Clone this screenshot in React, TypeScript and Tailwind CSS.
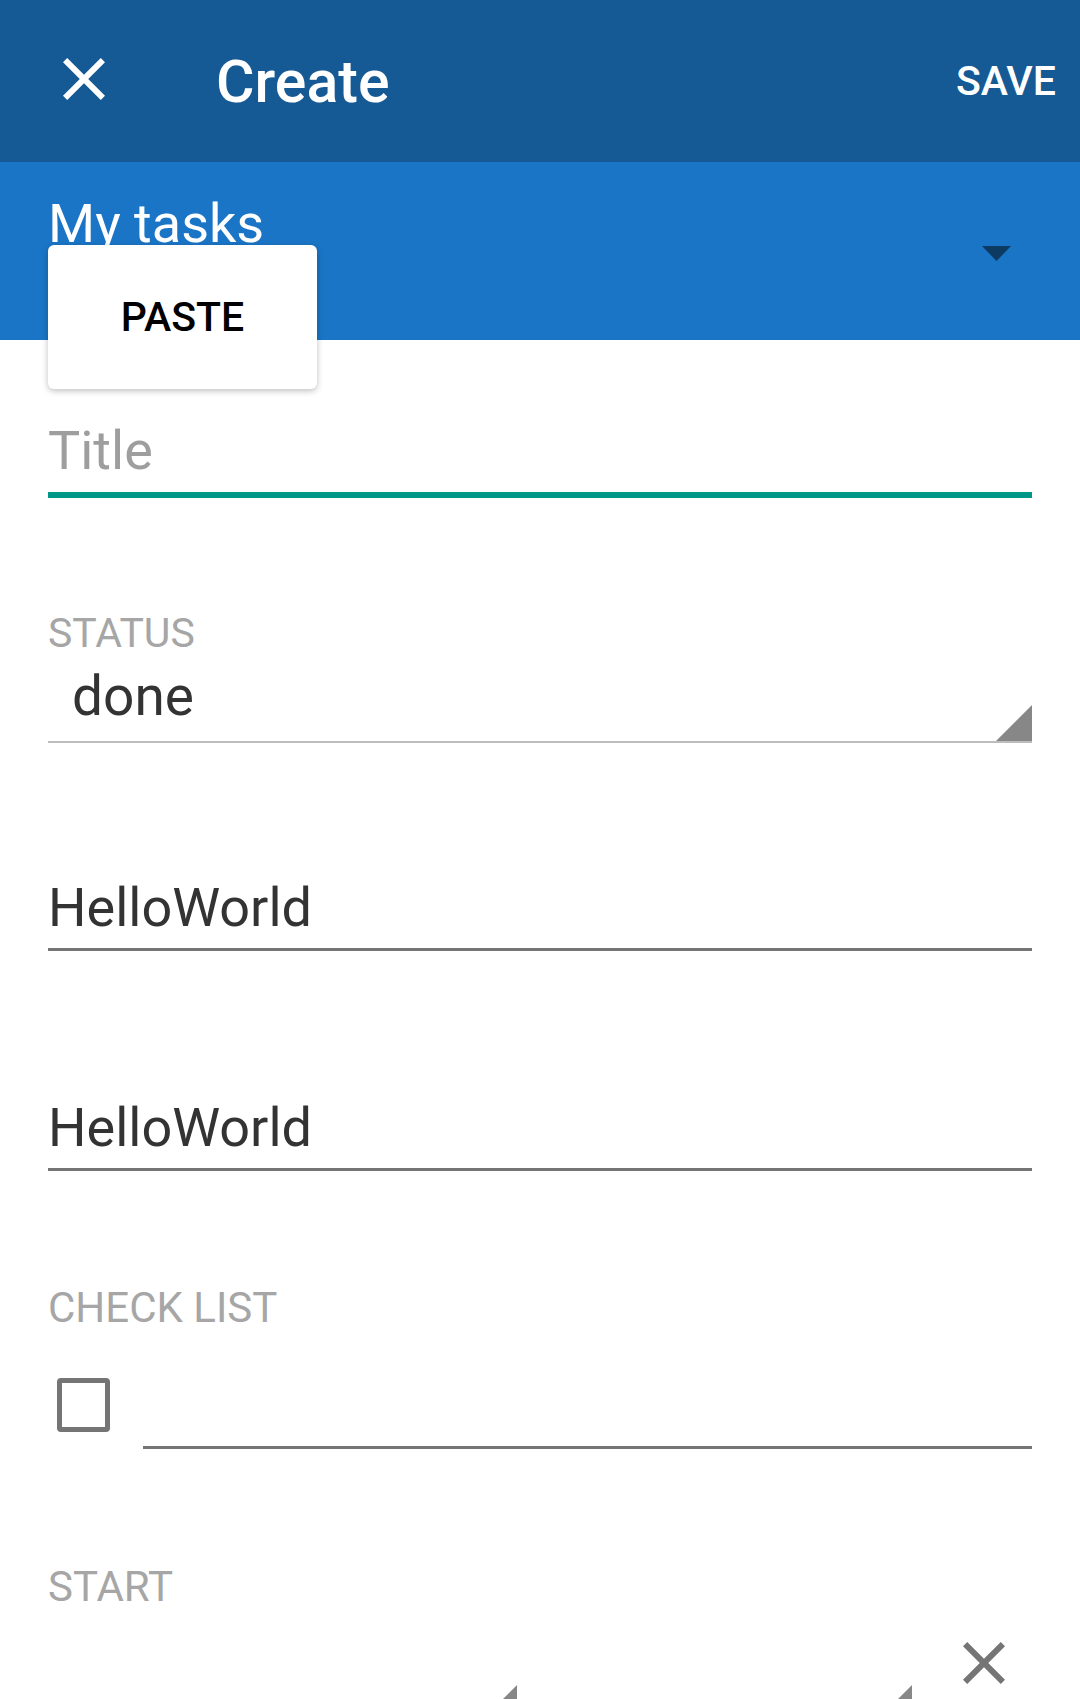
import React from 'react';

function CloseIcon({ className }: { className?: string }) {
    return (
        <svg viewBox="0 0 24 24" className={className} fill="currentColor">
            <path d="M19 6.41L17.59 5 12 10.59 6.41 5 5 6.41 10.59 12 5 17.59 6.41 19 12 13.41 17.59 19 19 17.59 13.41 12z" />
        </svg>
    );
}

function Corner() {
    return (
        <svg width="36" height="36" viewBox="0 0 36 36" className="block">
            <polygon points="36,0 36,36 0,36" fill="#878787" />
        </svg>
    );
}

export default function App() {
    return (
        <div className="relative w-[1080px] h-[1699px] overflow-hidden bg-white font-['Roboto',sans-serif]">
            {/* Toolbar */}
            <div className="flex items-center h-[162px] bg-[#155a95] text-white">
                <CloseIcon className="ml-[48px] -mt-[4px] w-[72px] h-[72px]" />
                <span className="ml-[96px] text-[59px] font-medium leading-none">Create</span>
                <span className="ml-auto mr-[24px] text-[41px] font-medium leading-none">SAVE</span>
            </div>

            {/* List selector */}
            <div className="flex items-start justify-between h-[178px] bg-[#1a75c6] pl-[48px] pr-[69px]">
                <span className="mt-[35px] text-[54px] leading-none text-white">My tasks</span>
                <svg width="29" height="15" viewBox="0 0 29 15" className="mt-[84px]">
                    <polygon points="0,0 29,0 14.5,15" fill="#0d3a60" />
                </svg>
            </div>

            {/* Paste popup */}
            <div className="absolute left-[48px] top-[245px] w-[269px] h-[144px] flex items-center justify-center bg-white rounded-[6px] shadow-[0_2px_6px_rgba(0,0,0,0.25)]">
                <span className="text-[41px] font-medium leading-none text-black">PASTE</span>
            </div>

            {/* Form */}
            <div className="flex flex-col px-[48px]">
                <div className="pt-[84px] text-[54px] leading-none text-[#9e9e9e]">Title</div>
                <div className="mt-[14px] h-[6px] bg-[#009688]" />

                <div className="mt-[115px] text-[41px] leading-none text-[#a6a6a6]">STATUS</div>
                <div className="mt-[15px] flex items-start justify-between h-[72px]">
                    <span className="pl-[24px] text-[55px] leading-none text-[#333333]">done</span>
                    <div className="self-end">
                        <Corner />
                    </div>
                </div>
                <div className="h-[2px] bg-[#bdbdbd]" />

                <div className="mt-[138px] text-[54px] leading-none text-[#333333]">HelloWorld</div>
                <div className="mt-[13px] h-[3px] bg-[#757575]" />

                <div className="mt-[150px] text-[54px] leading-none text-[#333333]">HelloWorld</div>
                <div className="mt-[13px] h-[3px] bg-[#757575]" />

                <div className="mt-[116px] text-[42px] leading-none text-[#a6a6a6]">CHECK LIST</div>
                <div className="mt-[49px] flex items-start">
                    <div className="ml-[9px] w-[53px] h-[54px] border-[5px] border-[#757575] rounded-[4px]" />
                    <div className="ml-[33px] mt-[68px] flex-1 h-[3px] bg-[#757575]" />
                </div>

                <div className="mt-[117px] text-[42px] leading-none text-[#a6a6a6]">START</div>
                <div className="mt-[34px] flex items-start">
                    <div className="w-[469px] flex justify-end pt-[43px]">
                        <Corner />
                    </div>
                    <div className="ml-[31px] w-[364px] flex justify-end pt-[43px]">
                        <Corner />
                    </div>
                    <CloseIcon className="ml-[36px] -mt-[15px] w-[72px] h-[72px] text-[#757575]" />
                </div>
            </div>
        </div>
    );
}
